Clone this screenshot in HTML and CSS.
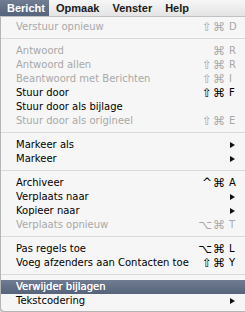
FILE: index.html
```html
<!DOCTYPE html>
<html lang="nl">
<head>
<meta charset="utf-8">
<title>Bericht menu</title>
<link rel="stylesheet" href="styles.css">
</head>
<body>
<div class="screen">
  <div class="menubar">
    <span class="title active">Bericht</span>
    <span class="title">Opmaak</span>
    <span class="title">Venster</span>
    <span class="title">Help</span>
  </div>
  <div class="menu">
    <div class="item disabled"><span class="label">Verstuur opnieuw</span><span class="mod">⇧⌘</span><span class="key">D</span></div>
    <div class="sep"></div>
    <div class="item disabled"><span class="label">Antwoord</span><span class="mod">⌘</span><span class="key">R</span></div>
    <div class="item disabled"><span class="label">Antwoord allen</span><span class="mod">⇧⌘</span><span class="key">R</span></div>
    <div class="item disabled"><span class="label">Beantwoord met Berichten</span><span class="mod">⇧⌘</span><span class="key">I</span></div>
    <div class="item"><span class="label">Stuur door</span><span class="mod">⇧⌘</span><span class="key">F</span></div>
    <div class="item"><span class="label">Stuur door als bijlage</span><span class="mod"></span><span class="key"></span></div>
    <div class="item disabled"><span class="label">Stuur door als origineel</span><span class="mod">⇧⌘</span><span class="key">E</span></div>
    <div class="sep"></div>
    <div class="item"><span class="label">Markeer als</span><span class="mod"></span><span class="key"><i class="arrow"></i></span></div>
    <div class="item"><span class="label">Markeer</span><span class="mod"></span><span class="key"><i class="arrow"></i></span></div>
    <div class="sep"></div>
    <div class="item"><span class="label">Archiveer</span><span class="mod">^⌘</span><span class="key">A</span></div>
    <div class="item"><span class="label">Verplaats naar</span><span class="mod"></span><span class="key"><i class="arrow"></i></span></div>
    <div class="item"><span class="label">Kopieer naar</span><span class="mod"></span><span class="key"><i class="arrow"></i></span></div>
    <div class="item disabled"><span class="label">Verplaats opnieuw</span><span class="mod">⌥⌘</span><span class="key">T</span></div>
    <div class="sep"></div>
    <div class="item"><span class="label">Pas regels toe</span><span class="mod">⌥⌘</span><span class="key">L</span></div>
    <div class="item"><span class="label">Voeg afzenders aan Contacten toe</span><span class="mod">⇧⌘</span><span class="key">Y</span></div>
    <div class="sep"></div>
    <div class="item selected"><span class="label">Verwijder bijlagen</span><span class="mod"></span><span class="key"></span></div>
    <div class="item"><span class="label">Tekstcodering</span><span class="mod"></span><span class="key"><i class="arrow"></i></span></div>
  </div>
</div>
</body>
</html>
```
FILE: styles.css
```css
html, body {
  margin: 0;
  padding: 0;
  background: #e9e9e9;
}
.screen {
  width: 245px;
  height: 312px;
  overflow: hidden;
  display: flex;
  flex-direction: column;
}
.menubar {
  height: 16px;
  display: flex;
  align-items: stretch;
  background: linear-gradient(#f6f6f6, #e4e4e4);
  border-bottom: 1px solid #c4c4c4;
  font-family: "Liberation Sans", Arial, sans-serif;
  font-weight: bold;
  font-size: 11px;
  line-height: 16px;
  color: #1a1a1a;
}
.title {
  padding: 0 6px 0 7px;
}
.title.active {
  width: 36px;
  background: linear-gradient(#6f7c92, #56647b);
  color: #fff;
}
.menu {
  background: #f6f6f6;
  border-left: 1px solid #b4b4b4;
  border-bottom: 1px solid #b4b4b4;
  border-bottom-left-radius: 5px;
  padding: 3px 0 3px;
  font-family: "DejaVu Sans", sans-serif;
  font-size: 10px;
  color: #000;
  box-shadow: 0 1px 2px rgba(0,0,0,0.25);
}
.item {
  height: 14px;
  line-height: 14px;
  display: flex;
  align-items: center;
  padding: 0 7px 0 15px;
  white-space: nowrap;
}
.label {
  flex: 1;
}
.mod {
  font-size: 12px;
  letter-spacing: 1px;
  margin-right: 3px;
}
.key {
  width: 9px;
  display: flex;
  align-items: center;
}
.disabled {
  color: #a8a8a8;
}
.selected {
  background: linear-gradient(#6f7c92, #56647b);
  color: #fff;
  text-shadow: 0 0 0.4px #fff;
}
.sep {
  height: 10px;
  display: flex;
  align-items: center;
}
.sep::before {
  content: "";
  flex: 1;
  height: 1px;
  margin-top: -1px;
  background: #dadada;
}
.arrow {
  display: block;
  margin-left: 1px;
  width: 0;
  height: 0;
  border-left: 5px solid #111;
  border-top: 3.5px solid transparent;
  border-bottom: 3.5px solid transparent;
}
```
